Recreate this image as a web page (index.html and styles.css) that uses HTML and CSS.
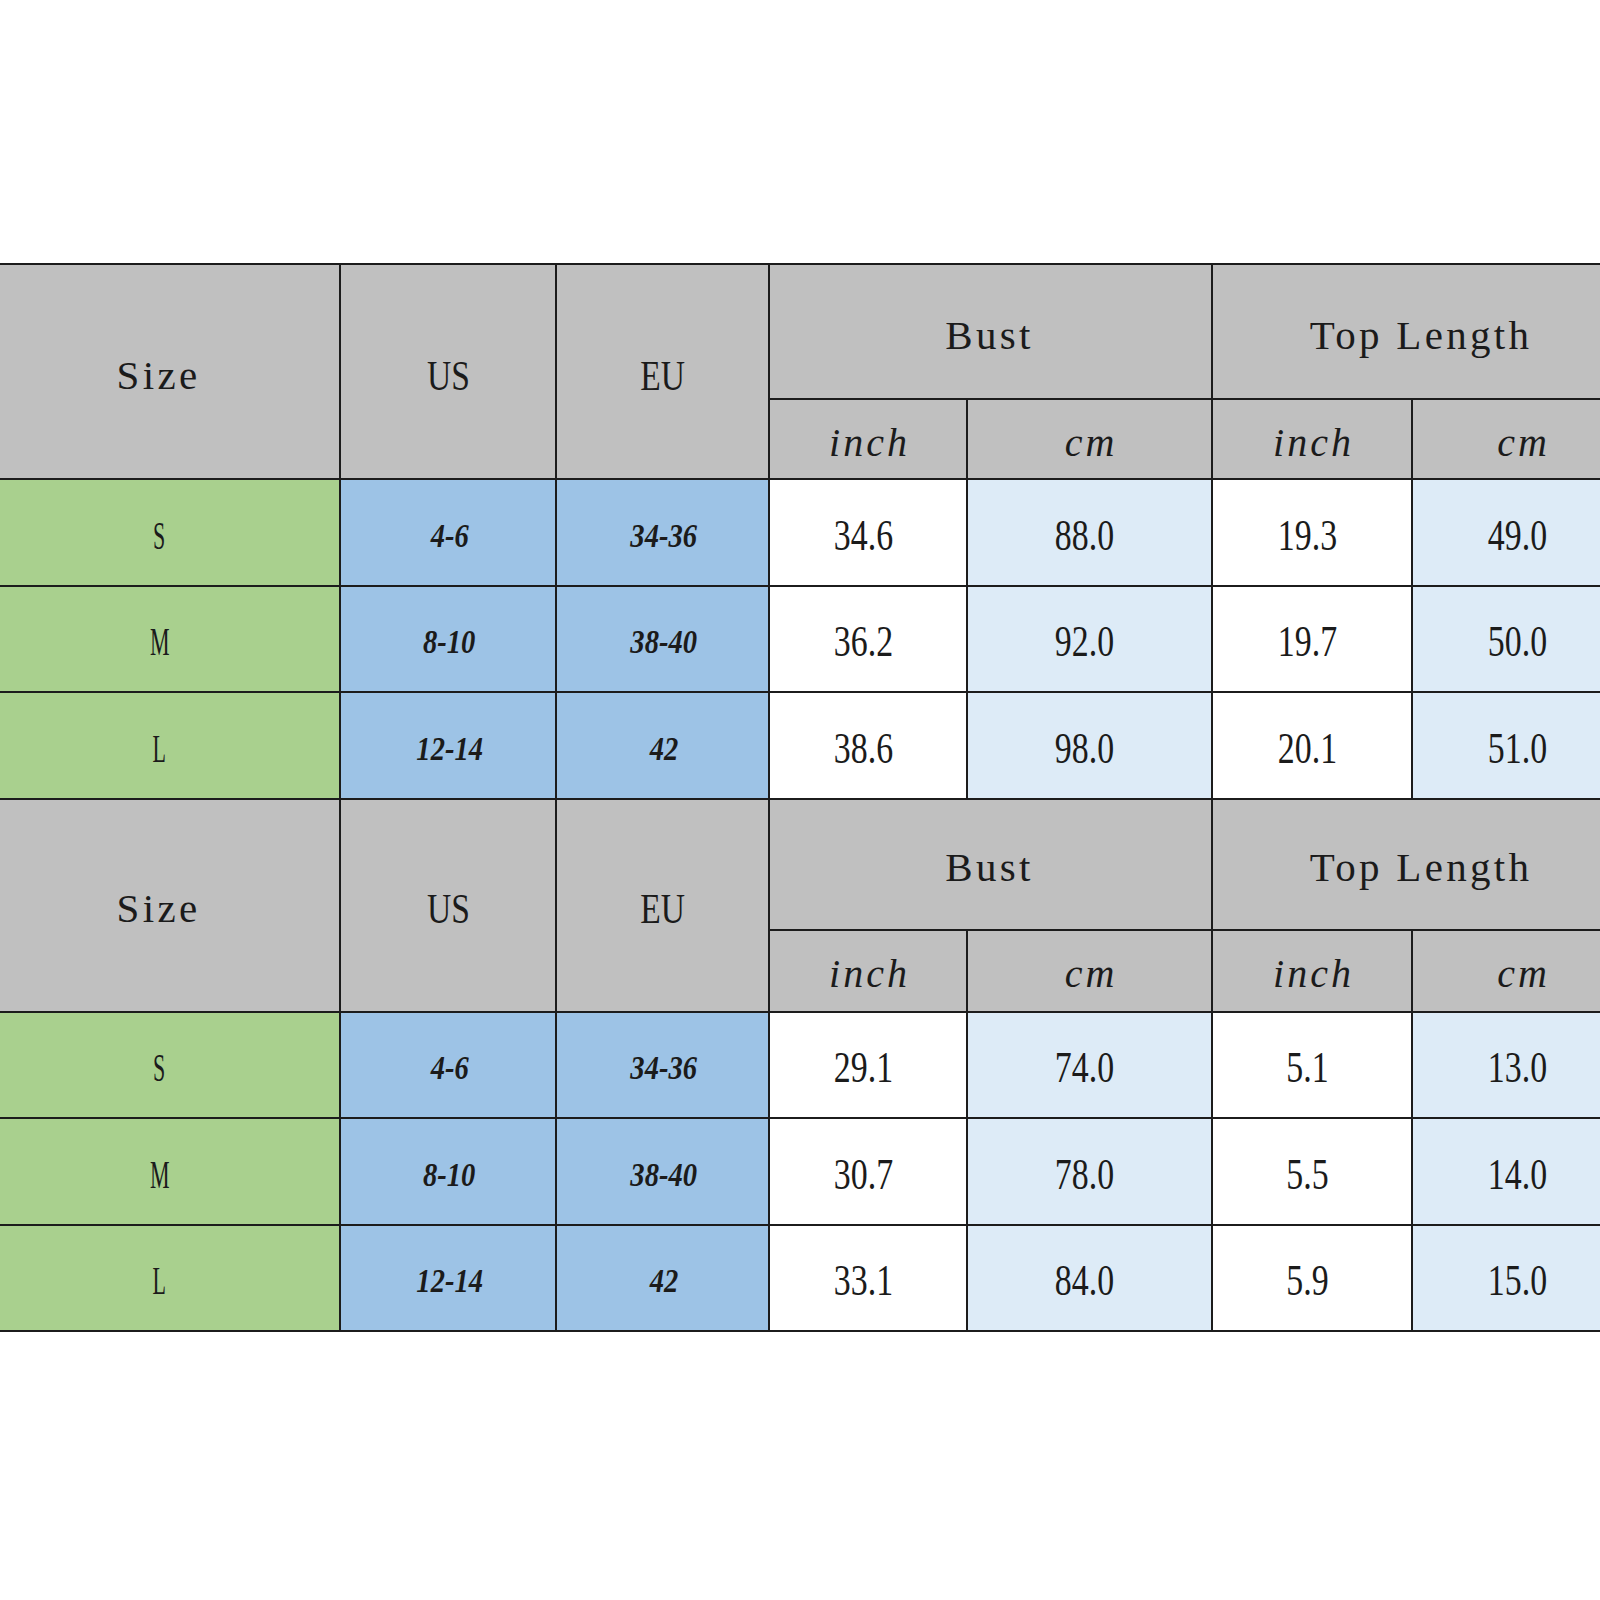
FILE: index.html
```html
<!DOCTYPE html>
<html>
<head>
<meta charset="utf-8">
<title>Size Chart</title>
<link rel="stylesheet" href="styles.css">
</head>
<body>
<div class="sheet">
<table class="chart">
<colgroup>
<col class="c-size"><col class="c-us"><col class="c-eu"><col class="c-bi"><col class="c-bc"><col class="c-ti"><col class="c-tc">
</colgroup>
<tbody>
<tr class="h1 first">
<th rowspan="2" class="hd mono">Size</th>
<th rowspan="2" class="hd"><span class="cond">US</span></th>
<th rowspan="2" class="hd"><span class="cond">EU</span></th>
<th colspan="2" class="hd mono">Bust</th>
<th colspan="2" class="hd mono">Top Length</th>
</tr>
<tr class="h2 first">
<th class="hd unit">inch</th><th class="hd unit">cm</th><th class="hd unit">inch</th><th class="hd unit">cm</th>
</tr>
<tr class="row"><td class="sz"><span>S</span></td><td class="eq"><span>4-6</span></td><td class="eq"><span>34-36</span></td><td class="num"><span>34.6</span></td><td class="num lt"><span>88.0</span></td><td class="num"><span>19.3</span></td><td class="num lt"><span>49.0</span></td></tr>
<tr class="row"><td class="sz"><span>M</span></td><td class="eq"><span>8-10</span></td><td class="eq"><span>38-40</span></td><td class="num"><span>36.2</span></td><td class="num lt"><span>92.0</span></td><td class="num"><span>19.7</span></td><td class="num lt"><span>50.0</span></td></tr>
<tr class="row"><td class="sz"><span>L</span></td><td class="eq"><span>12-14</span></td><td class="eq"><span>42</span></td><td class="num"><span>38.6</span></td><td class="num lt"><span>98.0</span></td><td class="num"><span>20.1</span></td><td class="num lt"><span>51.0</span></td></tr>
<tr class="h1 second">
<th rowspan="2" class="hd mono">Size</th>
<th rowspan="2" class="hd"><span class="cond">US</span></th>
<th rowspan="2" class="hd"><span class="cond">EU</span></th>
<th colspan="2" class="hd mono">Bust</th>
<th colspan="2" class="hd mono">Top Length</th>
</tr>
<tr class="h2 second">
<th class="hd unit">inch</th><th class="hd unit">cm</th><th class="hd unit">inch</th><th class="hd unit">cm</th>
</tr>
<tr class="row"><td class="sz"><span>S</span></td><td class="eq"><span>4-6</span></td><td class="eq"><span>34-36</span></td><td class="num"><span>29.1</span></td><td class="num lt"><span>74.0</span></td><td class="num"><span>5.1</span></td><td class="num lt"><span>13.0</span></td></tr>
<tr class="row"><td class="sz"><span>M</span></td><td class="eq"><span>8-10</span></td><td class="eq"><span>38-40</span></td><td class="num"><span>30.7</span></td><td class="num lt"><span>78.0</span></td><td class="num"><span>5.5</span></td><td class="num lt"><span>14.0</span></td></tr>
<tr class="row"><td class="sz"><span>L</span></td><td class="eq"><span>12-14</span></td><td class="eq"><span>42</span></td><td class="num"><span>33.1</span></td><td class="num lt"><span>84.0</span></td><td class="num"><span>5.9</span></td><td class="num lt"><span>15.0</span></td></tr>
</tbody>
</table>
</div>
</body>
</html>
```

FILE: styles.css
```css
html, body {
  margin: 0;
  padding: 0;
  background: #ffffff;
  overflow: hidden;
}

.sheet {
  width: 1600px;
  height: 1600px;
  overflow: hidden;
  box-sizing: border-box;
  padding-top: 263px;
}

.chart {
  margin-left: -22px;
  width: 1653px;
  border-collapse: collapse;
  table-layout: fixed;
  font-family: "Liberation Serif", "Times New Roman", serif;
  color: #1b1b1b;
}

.c-size { width: 361px; }
.c-us { width: 216px; }
.c-eu { width: 213px; }
.c-bi { width: 198px; }
.c-bc { width: 245px; }
.c-ti { width: 200px; }
.c-tc { width: 220px; }

.chart th,
.chart td {
  border: 2px solid #1c1c1c;
  padding: 7px 0 0 0;
  text-align: center;
  vertical-align: middle;
  font-weight: normal;
  line-height: 1;
}

.h1.first { height: 135px; }
.h2.first { height: 80px; }
.h1.second { height: 131px; }
.h2.second { height: 82px; }
.row { height: 106.5px; }

.hd {
  background: #c0c0c0;
}

.chart .mono {
  font-size: 41px;
  letter-spacing: 3.3px;
  padding-right: 2px;
}

.chart .unit {
  font-style: italic;
  font-size: 40px;
  letter-spacing: 3px;
  padding-left: 3px;
}

.cond {
  display: inline-block;
  font-size: 43px;
  transform: scaleX(0.78);
}

.sz {
  background: #a9d08e;
}
.sz span {
  display: inline-block;
  font-size: 40px;
  transform: scaleX(0.55);
}

.chart .eq {
  background: #9dc3e6;
  padding-left: 3px;
}
.eq span {
  display: inline-block;
  font-size: 34px;
  font-style: italic;
  font-weight: bold;
  transform: scaleX(0.84);
}

.chart .num {
  background: #ffffff;
  padding-right: 10px;
}
.chart .num.lt {
  background: #ddebf7;
}
.num span {
  display: inline-block;
  font-size: 44px;
  transform: scaleX(0.77);
}
```
